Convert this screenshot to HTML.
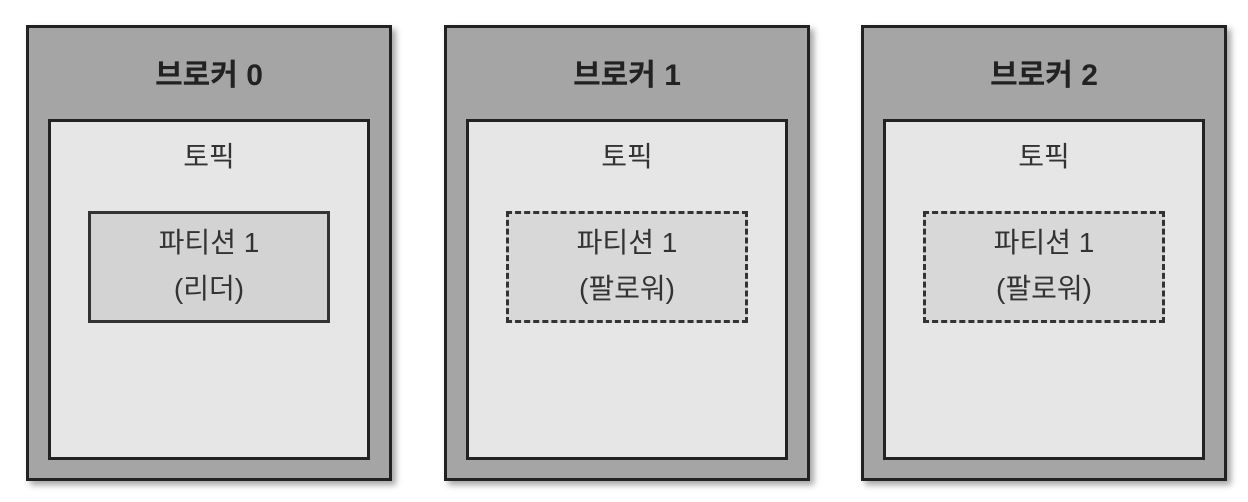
<!DOCTYPE html>
<html><head><meta charset="utf-8"><style>
html,body{margin:0;padding:0;background:#fff;width:1248px;height:502px;overflow:hidden;font-family:"Liberation Sans","Noto Sans CJK KR",sans-serif;}
.b{position:absolute;top:25px;width:360px;height:450px;background:#a5a5a5;border:3px solid #222;box-shadow:4px 4px 6px rgba(0,0,0,.35);}
.b h1{position:absolute;top:22px;left:0;right:0;text-align:center;margin:0;font-size:30px;font-weight:bold;color:#222;}
.t{position:absolute;left:19px;top:91px;width:316px;height:335px;background:#e6e6e6;border:3px solid #222;}
.t .l{position:absolute;top:13px;left:0;right:0;text-align:center;font-size:28px;color:#333;}
.p{position:absolute;left:37px;top:89px;width:242px;height:112px;background:#d3d3d3;border:3px solid #333;text-align:center;font-size:28px;line-height:46px;color:#333;padding-top:6px;box-sizing:border-box;}
.d{border:3px dashed #333;background:#d8d8d8;}
</style></head><body>
<div class="b" style="left:26px"><h1>브로커 0</h1><div class="t"><div class="l">토픽</div><div class="p">파티션 1<br>(리더)</div></div></div>
<div class="b" style="left:444px"><h1>브로커 1</h1><div class="t"><div class="l">토픽</div><div class="p d">파티션 1<br>(팔로워)</div></div></div>
<div class="b" style="left:861px"><h1>브로커 2</h1><div class="t"><div class="l">토픽</div><div class="p d">파티션 1<br>(팔로워)</div></div></div>
</body></html>
